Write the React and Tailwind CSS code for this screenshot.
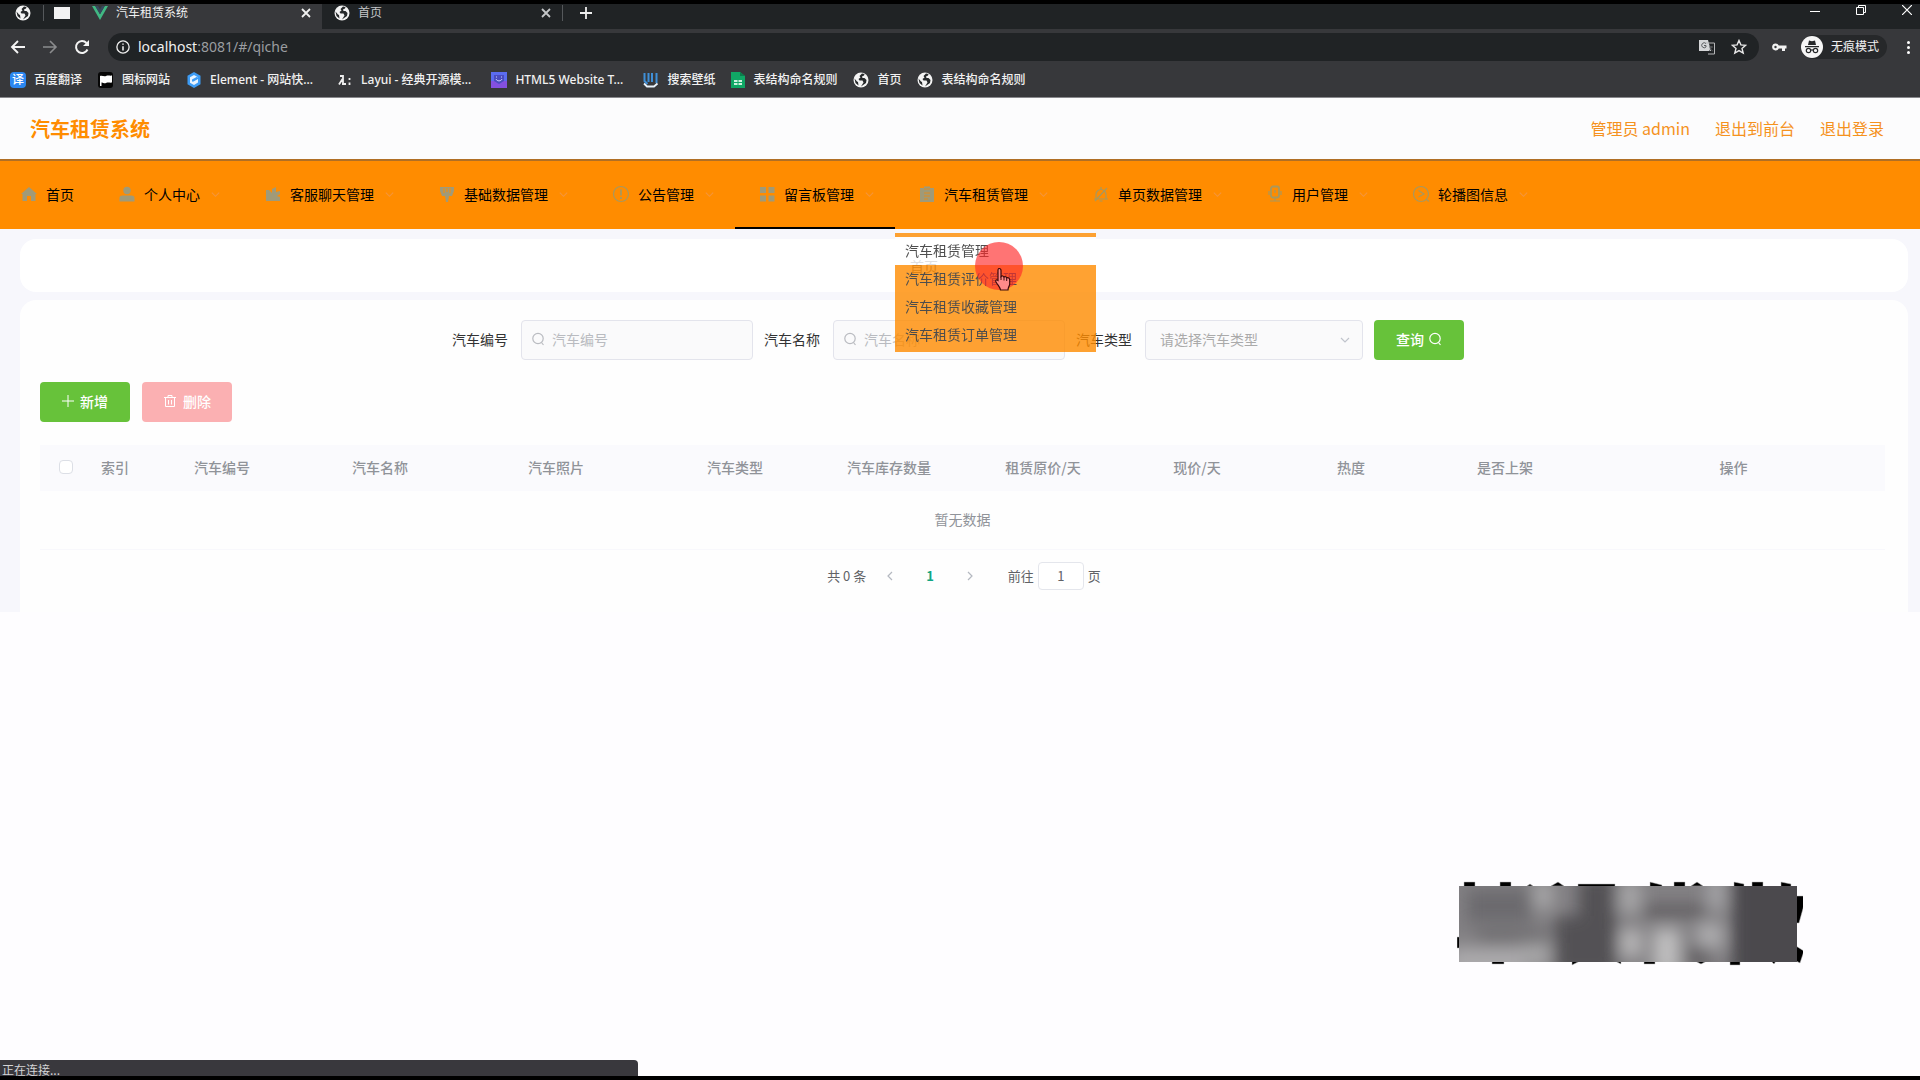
import React from "react";

const Globe = () => (
  <svg viewBox="0 0 16 16" className="h-4 w-4 shrink-0">
    <circle cx="8" cy="8" r="7.5" fill="#f4f4f4" />
    <path d="M9 1.5 6.5 4l1 1.5-2 1.5 1 1.5h3l1 2-2.5 4 5-3.500.5-3-2-2h-2l-.5-1.500 2-1 .5-1.500zM1.500 6.500 4 9.500l1 .5.500 3.500-3-2.500z" fill="#26292b" />
  </svg>
);
const VueLogo = () => (
  <svg viewBox="0 0 16 16" className="h-4 w-4 shrink-0">
    <path d="M0 1h3.200L8 9.300 12.800 1H16L8 15z" fill="#41b883" />
    <path d="M3.200 1H6l2 3.500L10 1h2.800L8 9.300z" fill="#35495e" />
  </svg>
);
const Translate = () => (
  <span className="flex h-4 w-4 shrink-0 items-center justify-center rounded-sm bg-[#2b87f0] text-xs leading-4 text-white">译</span>
);
const Flag = () => (
  <svg viewBox="0 0 16 16" className="h-4 w-4 shrink-0">
    <rect width="15" height="16" rx="3" fill="#060606" />
    <path d="M2 4c2-1 4 1 6 0s4 0 6-.5v7c-2 .5-4-.5-6 .5s-3-1-4.500-.5V14H2z" fill="#fff" />
  </svg>
);
const ElementLogo = () => (
  <svg viewBox="0 0 16 16" className="h-4 w-4 shrink-0">
    <path d="M8 0l6.500 3.800v8.400L8 16l-6.500-3.800V3.800z" fill="#3d9cf5" />
    <path d="M8 3l4 2.200L6.500 8.500v1.500L12 7v3.500L8 13l-4-2.300V5.300z" fill="#e9f4ff" />
    <path d="M6 7.500 11.500 4.500v2L6 9.500z" fill="#3d9cf5" />
  </svg>
);
const LayuiLogo = () => (
  <svg viewBox="0 0 16 16" className="h-4 w-4 shrink-0" fill="none" stroke="#eee" strokeWidth="1.800">
    <path d="M3 4h3v8M5.500 7 2 12.500M5 12h4M12.500 6v2M12.500 10.500v2.500" />
  </svg>
);
const HtmlLogo = () => (
  <svg viewBox="0 0 16 16" className="h-4 w-4 shrink-0">
    <path d="M0 0h16v16H0z" fill="#5b6cf0" />
    <path d="M0 9h16v7H0z" fill="#8450e0" />
    <path d="M3 3h10v6l-5 3-5-3z" fill="#4a4cc0" />
    <path d="M5 7c1 2.500 5 2.500 6 0M5.500 4.500v1M10.500 4.500v1" stroke="#cfd0ff" fill="none" />
  </svg>
);
const WallLogo = () => (
  <svg viewBox="0 0 16 16" className="h-4 w-4 shrink-0" fill="none">
    <path d="M1.500 1v8l3 3M5.500 1v9M9 1v9M13.500 1v10" stroke="#3f8fd8" strokeWidth="2" />
    <path d="M1 11.500 4 14.500h7l3.500-3" stroke="#e8f2fb" strokeWidth="1.800" />
  </svg>
);
const Sheet = () => (
  <svg viewBox="0 0 14 16" className="h-4 w-3.5 shrink-0">
    <path d="M0 0h9l5 4v12H0z" fill="#10a765" />
    <path d="M9 0v4h5z" fill="#0b7d4b" />
    <path d="M3 8h8v5H3z" fill="#cdf3e0" />
    <path d="M3 10.500h8M7 8v5" stroke="#10a765" />
  </svg>
);

const I = ({ children }) => (
  <svg viewBox="0 0 18 18" className="h-[18px] w-6 shrink-0" fill="#a09a78" stroke="none">{children}</svg>
);
const o = { fill: "none", stroke: "#a8985e", strokeWidth: 1.2 };
const icons = {
  home: <I><path d="M9 2 1 9h1.500v7H7v-5h4v5h4.500V9H17z" /></I>,
  user: <I><circle cx="9" cy="5.500" r="3.700" /><path d="M1.500 16.500V13c0-1.800 1.500-2.500 3-2.500h9c1.500 0 3 .7 3 2.500v3.500z" /></I>,
  chart: <I><path d="M2 5h3l3 3V4l4-2v5l4-1v3l-3 2 3 1v4H2z" /></I>,
  pin: <I><path d="M2 2h14v4l-2 5h-3l-1 6H8l-1-6H4L2 6z" /><path d="M6 3v5M12 3v5M9 3v4" stroke="#ff8c00" /></I>,
  notice: <I><circle cx="9" cy="9" r="7.500" {...o} /><path d="M9 4.500v6M9 12v2" {...o} strokeWidth="1.800" /></I>,
  grid: <I><path d="M2 2h6v6H2zM10.500 2h6v6h-6zM2 10.500h6v6H2zM10.500 10.500h6v6h-6z" /></I>,
  clip: <I><path d="M2 3h4V1.500h6V3h4v14H2z" /><path d="M6 4h6M6 8h6M6 11h6M6 14h4" stroke="#e08c20" /></I>,
  bell: <I><path d="M2 14h14M4 14V9.500a5 5 0 0 1 10 0V14M9 2v2M3 16 15 3M7.500 16h3" {...o} /></I>,
  cup: <I><rect x="5" y="1.500" width="8" height="11" rx="2" {...o} strokeWidth="1.800" /><path d="M9 12.500V16M4 16h10M3 6v4M15 6v4M9 5v3" {...o} /></I>,
  clock: <I><circle cx="9" cy="9" r="7.500" {...o} /><path d="M6.500 5.500 12 9l-5.500 3M14 14l3 2.500" {...o} /></I>,
};

const menus = [
  ["个人中心", "user"],
  ["客服聊天管理", "chart"],
  ["基础数据管理", "pin"],
  ["公告管理", "notice"],
  ["留言板管理", "grid"],
  ["汽车租赁管理", "clip"],
  ["单页数据管理", "bell"],
  ["用户管理", "cup"],
  ["轮播图信息", "clock"],
];
const submenus = ["汽车租赁管理", "汽车租赁评价管理", "汽车租赁收藏管理", "汽车租赁订单管理"];
const bookmarks = [
  ["百度翻译", <Translate />, "mr-4"],
  ["图标网站", <Flag />, "mr-4"],
  ["Element - 网站快...", <ElementLogo />, "mr-6"],
  ["Layui - 经典开源模...", <LayuiLogo />, "mr-5"],
  ["HTML5 Website T...", <HtmlLogo />, "mr-5"],
  ["搜索壁纸", <WallLogo />, "mr-4"],
  ["表结构命名规则", <Sheet />, "mr-4"],
  ["首页", <Globe />, "mr-4"],
  ["表结构命名规则", <Globe />, ""],
];
const columns = ["汽车编号", "汽车名称", "汽车照片", "汽车类型", "汽车库存数量", "租赁原价/天", "现价/天", "热度", "是否上架", "操作"];

const Search = ({ className }) => (
  <svg viewBox="0 0 14 14" className={className} fill="none" stroke="currentColor" strokeWidth="1.200">
    <circle cx="7" cy="6.500" r="5.200" /><path d="M10.500 10.500l2 2.500" />
  </svg>
);
const Chevron = ({ d, className }) => (
  <svg viewBox="0 0 12 12" className={className} fill="none" stroke="currentColor" strokeWidth="1.200"><path d={d} /></svg>
);
const Close = () => (
  <svg viewBox="0 0 12 12" className="h-3 w-3" fill="none" stroke="currentColor" strokeWidth="1.800"><path d="M2 2l8 8M10 2l-8 8" /></svg>
);

function Browser() {
  return (
    <header className="border-t-4 border-b border-t-black border-b-[#88888c] bg-[#37383b] font-['Noto_Sans','Noto_Sans_CJK_SC',sans-serif] text-xs text-[#f1f1f1]">
      <div className="flex h-[25px] items-center bg-[#202325]">
        <div className="flex h-full w-20 items-center pb-2">
          <button aria-label="标签" className="ml-[15px]"><Globe /></button>
          <span className="ml-3 h-4 w-px bg-[#55585b]" />
          <button aria-label="空白标签" className="ml-2.5 h-3 w-4 bg-[#f2f2f2]" />
        </div>
        <div className="flex h-full w-[242px] items-center bg-[#37383b] pb-2 pl-3 pr-2.5">
          <VueLogo />
          <span className="ml-2 flex-1">汽车租赁系统</span>
          <button aria-label="关闭"><Close /></button>
        </div>
        <div className="flex h-full w-[240px] items-center pb-2 pl-3 pr-2.5 text-[#c4c6c8]">
          <Globe />
          <span className="ml-2 flex-1">首页</span>
          <button aria-label="关闭"><Close /></button>
        </div>
        <div className="flex h-full flex-1 items-center pb-2">
          <span className="h-4 w-px bg-[#55585b]" />
          <button aria-label="新标签" className="ml-4">
            <svg viewBox="0 0 14 14" className="h-3.5 w-3.5" stroke="#eee" strokeWidth="1.800"><path d="M7 1v12M1 7h12" /></svg>
          </button>
          <div className="mb-1.5 ml-auto flex items-center gap-9 pr-2">
            <button aria-label="最小化"><svg viewBox="0 0 10 10" className="h-2.5 w-2.5" stroke="#fff"><path d="M0 6.500h10" /></svg></button>
            <button aria-label="还原"><svg viewBox="0 0 10 10" className="h-2.5 w-2.5" stroke="#fff" fill="none"><path d="M.5 2.500h7v7h-7zM2.500 2.500v-2h7v7h-2" /></svg></button>
            <button aria-label="关闭窗口"><svg viewBox="0 0 10 10" className="h-2.5 w-2.5" stroke="#fff" strokeWidth="1.200"><path d="M0 0l10 10M10 0 0 10" /></svg></button>
          </div>
        </div>
      </div>
      <div className="flex h-9 items-center pl-2.5 pr-2.5">
        <button aria-label="后退"><svg viewBox="0 0 16 16" className="h-4 w-4" fill="none" stroke="#f4f4f4" strokeWidth="1.900"><path d="M15 8H2M8 2 2 8l6 6" /></svg></button>
        <button aria-label="前进" className="ml-4"><svg viewBox="0 0 16 16" className="h-4 w-4" fill="none" stroke="#8b8c8e" strokeWidth="1.600"><path d="M1 8h13M8 2l6 6-6 6" /></svg></button>
        <button aria-label="刷新" className="ml-4"><svg viewBox="0 0 16 16" className="h-4 w-4" fill="none" stroke="#f4f4f4" strokeWidth="2"><path d="M13.500 10.500A6 6 0 1 1 12.500 4" /><path d="M15 1v6H9z" fill="#f4f4f4" stroke="none" /></svg></button>
        <div className="ml-[18px] flex h-7 flex-1 items-center rounded-full bg-[#202325] pl-2 pr-3">
          <svg viewBox="0 0 16 16" className="h-3.5 w-3.5" fill="none" stroke="#eee" strokeWidth="1.500"><circle cx="8" cy="8" r="7" /><path d="M8 7v5M8 4v1.500" strokeWidth="1.800" /></svg>
          <span className="ml-2 flex-1 text-sm text-[#9a9da0]"><span className="text-[#f1f1f1]">localhost</span>:8081/#/qiche</span>
          <button aria-label="翻译">
            <svg viewBox="0 0 16 16" className="h-4 w-4"><path d="M0 1h9l3 11H0z" fill="#d5d6d8" /><path d="M7 4h8.500v11H9" fill="none" stroke="#b5b6b8" /><path d="M7 4.500A2.500 2.500 0 1 0 7 8V6.500H5M10 8h4M12 7v1c0 2-1 3-2 4M11 9c1 2 2 2.500 3 3" fill="none" stroke="#5c5e61" /></svg>
          </button>
          <button aria-label="收藏" className="ml-4">
            <svg viewBox="0 0 16 16" className="h-4 w-4" fill="none" stroke="#e8e8e8" strokeWidth="1.400"><path d="M8 1.500l1.900 4.400 4.800.4-3.700 3.100 1.200 4.700L8 11.600l-4.200 2.500L5 9.400 1.300 6.300l4.800-.4z" /></svg>
          </button>
        </div>
        <button aria-label="密码" className="ml-3">
          <svg viewBox="0 0 16 16" className="h-4 w-4"><path d="M4.500 4.500a3.500 3.500 0 1 0 3.300 5H11v2.500h3V9.500h1.500v-3H7.800a3.500 3.500 0 0 0-3.300-2zm0 2.300a1.200 1.200 0 1 1 0 2.400 1.200 1.200 0 0 1 0-2.400z" fill="#f2f2f2" /></svg>
        </button>
        <button className="ml-3.5 flex h-6 items-center rounded-full bg-[#26282a] pr-2">
          <svg viewBox="0 0 22 22" className="mr-2 h-[22px] w-[22px]"><circle cx="11" cy="11" r="11" fill="#f6f6f6" /><path d="M4 10h14v1.200H4zM7 9l1-4.500 3 .8 3-.8L15 9z" fill="#26282a" /><g fill="none" stroke="#26282a" strokeWidth="1.200"><circle cx="7.500" cy="14.500" r="2.200" /><circle cx="14.500" cy="14.500" r="2.200" /><path d="M9.700 14h2.600" /></g></svg>
          无痕模式
        </button>
        <button aria-label="更多" className="ml-5 flex flex-col gap-0.5">
          <span className="h-[3px] w-[3px] rounded-full bg-white" /><span className="h-[3px] w-[3px] rounded-full bg-white" /><span className="h-[3px] w-[3px] rounded-full bg-white" />
        </button>
      </div>
      <nav className="flex h-8 items-center pl-2.5 pb-0.5 font-medium">
        {bookmarks.map(([t, icon, m], i) => (
          <a key={i} href="#" className={"flex items-center gap-2 whitespace-nowrap " + m}>{icon}<span>{t}</span></a>
        ))}
      </nav>
    </header>
  );
}

function NavBar() {
  return (
    <nav className="flex h-[70px] items-center border-t-2 border-[#b06f25] bg-[#ff8c00] text-sm text-black">
      <a href="#" className="flex h-full items-center gap-[5px] border-b-2 border-transparent pl-[17px] pr-[21px]">{icons.home}首页</a>
      {menus.map(([t, ic]) => (
        <div key={t} className="relative h-full">
          <button className={"flex h-full items-center whitespace-nowrap px-5 border-b-2 " + (t === "留言板管理" ? "border-black" : "border-transparent")}>
            {icons[ic]}
            <span className="ml-[5px]">{t}</span>
            <Chevron d="M2 4l4 4 4-4" className="ml-2.5 h-[11px] w-[11px] text-[#f5953a]" />
          </button>
          {t === "汽车租赁管理" && (
            <div className="absolute left-0 top-[72px] z-10 w-[201px]">
              <div className="bg-[#ff8c00] pb-[3px] pt-1 text-sm text-[#222] opacity-80">
                {submenus.map((s, i) => (
                  <a key={s} href="#" className={"flex h-7 items-center px-2.5 pb-0.5 " + (i === 0 ? "bg-white" : "")}>{s}</a>
                ))}
              </div>
              <span className="absolute left-20 top-[9px] h-12 w-12 rounded-full bg-[#ff2a2a]/65" />
              <svg viewBox="0 0 18 24" className="absolute left-[99px] top-[34px] h-6 w-[18px]">
                <path d="M5 1.500c1.500 0 2 1 2 2v6c1-1 2.500-.5 3 .5 1-.6 2.300-.2 2.700.8 1.500-.5 3 .3 3 2V17c0 2-1.700 3-1.700 6H6.500c0-2-2-4-4.500-8-.8-1.500 0-2.500 1.200-2L4 13.500v-10c0-1 .3-2 1-2z" fill="#ff8a8a" stroke="#3c0a0a" strokeWidth="1.200" />
                <path d="M7 9.500V13M10 10v3.500M12.700 11v3" stroke="#3c0a0a" />
              </svg>
            </div>
          )}
        </div>
      ))}
    </nav>
  );
}

function SearchBar() {
  const box = "h-10 rounded border border-[#e3e4ec] bg-[#fafafb] pb-0.5 text-sm text-[#aaa] placeholder:text-[#b9bbc0]";
  return (
    <form className="flex items-center justify-center pt-5 pr-3 text-sm text-[#333]">
      <label htmlFor="no" className="mr-[13px] pb-0.5">汽车编号</label>
      <div className="relative mr-[11px]">
        <input id="no" placeholder="汽车编号" className={box + " w-[232px] pl-[30px]"} />
        <Search className="absolute left-2.5 top-3 h-3.5 w-3.5 text-[#b9bbc0]" />
      </div>
      <label htmlFor="name" className="mr-[13px] pb-0.5">汽车名称</label>
      <div className="relative mr-[11px]">
        <input id="name" placeholder="汽车名称" className={box + " w-[232px] pl-[30px]"} />
        <Search className="absolute left-2.5 top-3 h-3.5 w-3.5 text-[#b9bbc0]" />
      </div>
      <label htmlFor="type" className="mr-[13px] pb-0.5">汽车类型</label>
      <div className="relative mr-[11px]">
        <select id="type" className={box + " w-[218px] appearance-none pl-3.5"}><option>请选择汽车类型</option></select>
        <Chevron d="M2 4l4 4 4-4" className="absolute right-3 top-3.5 h-3 w-3 text-[#c0c4cc]" />
      </div>
      <button type="button" className="flex h-10 w-[90px] items-center justify-center gap-1 rounded bg-[#67c23a] pb-0.5 font-medium text-white">查询<Search className="h-3.5 w-3.5" /></button>
    </form>
  );
}

export default function App() {
  return (
    <div className="flex min-h-screen flex-col bg-[#fefdff] font-['Noto_Sans_CJK_SC',sans-serif]">
      <Browser />
      <div className="flex h-[61px] items-center bg-[#fcfcfd] pl-[30px] pr-9 text-[#f5921e]">
        <h1 className="flex-1 text-xl font-bold text-[#ff8c00]">汽车租赁系统</h1>
        <div className="flex gap-[25px] pb-0.5 text-base">
          <span>管理员 admin</span><a href="#">退出到前台</a><a href="#">退出登录</a>
        </div>
      </div>
      <NavBar />
      <main className="bg-[#f7f7fc] pl-5 pr-3 pt-2.5">
        <div className="flex h-[53px] items-center justify-center rounded-2xl bg-white pr-20 text-sm text-[#606266]">首页</div>
        <section className="mt-2 rounded-t-2xl bg-[#fefefe] px-5 pb-[22px]">
          <SearchBar />
          <div className="flex gap-3 pt-[22px] text-sm font-medium text-white">
            <button className="flex h-10 w-[90px] items-center justify-center gap-1.5 rounded bg-[#67c23a] pb-0.5">
              <svg viewBox="0 0 12 12" className="h-3 w-3" stroke="#fff"><path d="M6 0v12M0 6h12" /></svg>新增
            </button>
            <button className="flex h-10 w-[90px] items-center justify-center gap-1.5 rounded bg-[#fbb0b2] pb-0.5">
              <svg viewBox="0 0 14 14" className="h-3.5 w-3.5" fill="none" stroke="#fff"><path d="M1 3.500h12M5 3V1.500h4V3M2.500 3.500v9h9v-9M5.500 6v4.500M8.500 6v4.500" /></svg>删除
            </button>
          </div>
          <div className="pr-1 pt-[23px]">
            <table className="w-full table-fixed text-center text-sm text-[#909399]">
              <colgroup>
                <col className="w-[52px]" /><col className="w-[46px]" /><col className="w-[168px]" /><col className="w-[148px]" /><col className="w-[204px]" />
                <col className="w-[154px]" /><col className="w-[154px]" /><col className="w-[154px]" /><col className="w-[154px]" /><col className="w-[154px]" /><col className="w-[154px]" /><col className="w-[303px]" />
              </colgroup>
              <thead>
                <tr className="h-[46px] bg-[#fafafd]">
                  <th className="pb-0.5"><input type="checkbox" aria-label="全选" className="block mx-auto h-3.5 w-3.5 appearance-none rounded-sm border border-[#dcdfe6] bg-white" /></th>
                  <th className="pb-0.5 font-medium">索引</th>
                  {columns.map((c) => <th key={c} className="pb-0.5 font-medium">{c}</th>)}
                </tr>
              </thead>
              <tbody><tr className="h-[58px] border-b border-[#f8f8fc]"><td colSpan={12} className="pb-0.5">暂无数据</td></tr></tbody>
            </table>
          </div>
          <div className="mt-3 flex h-7 items-center justify-center text-[13px] text-[#606266]">
            <span>共 0 条</span>
            <button aria-label="上一页" className="ml-[18px]"><Chevron d="M8 2 4 6l4 4" className="h-3 w-3 text-[#b4b8c0]" /></button>
            <button className="mx-[30px] font-bold text-[#11a683]">1</button>
            <button aria-label="下一页"><Chevron d="M4 2l4 4-4 4" className="h-3 w-3 text-[#b4b8c0]" /></button>
            <label htmlFor="page" className="ml-8">前往</label>
            <input id="page" defaultValue="1" className="mx-1 h-7 w-[46px] rounded-sm border border-[#e4e6ec] bg-white text-center" />
            <span>页</span>
          </div>
        </section>
      </main>
      <div className="mr-[117px] mt-auto flex justify-end pb-[93px]">
        <svg viewBox="0 0 346 86" className="h-[86px] w-[346px]">
          <defs>
            <filter id="soft" x="-20%" y="-20%" width="140%" height="140%"><feGaussianBlur stdDeviation="8" /></filter>
            <clipPath id="box"><path d="M2 5h338v76H2z" /></clipPath>
          </defs>
          <path d="M7 1h11v5H7zM43 1h11v5H43zM70 5l3-2 3 2zM94 5l7-4 6 4zM121 3h37v3h-37zM193 1l12 3v2h-12zM217 1h11v5h-11zM234 5l6-4 6 4zM277 1l10 2v3h-10zM295 1h11v5h-11zM324 1l10 2v3h-10zM339 15h8v9l-5 18h-3zM339 65l8 5-4 12-4-2zM0 56h3v11H0zM35 80h12v3H35zM115 80h8l-8 4zM158 80h6v3zM187 80h11v3h-11zM238 80h12l-6 3zM273 80h10v4h-10zM314 80h5l-2 3z" fill="#000" stroke="#bbb" strokeWidth=".5" />
          <g clipPath="url(#box)">
            <path d="M2 5h338v76H2z" fill="#828083" />
            <g filter="url(#soft)">
              <path d="M10 8h65v34H10z" fill="#6c6a6e" /><path d="M-8 66h75v30H-8z" fill="#aaa9ab" /><path d="M20 52h70v9H20z" fill="#646265" /><path d="M65 62h28v25H65zM76 0h20v28H76z" fill="#a5a4a6" />
              <path d="M98 35h62v60H98zM122 -5h36v50h-36z" fill="#535154" /><path d="M162 0h22v32h-22z" fill="#a5a4a6" /><path d="M163 48h22v28h-22z" fill="#b5b4b5" />
              <path d="M185 24h65v12h-65z" fill="#5e5c5f" /><path d="M196 48h27v45h-27z" fill="#bebdbe" /><path d="M240 42h26v26h-26z" fill="#acabad" /><path d="M228 66h25v20h-25z" fill="#636164" />
              <path d="M250 -5h18v34h-18z" fill="#a3a2a5" /><path d="M275 -10h90v110h-90z" fill="#4c4a4d" />
            </g>
          </g>
        </svg>
      </div>
      <footer className="border-b-4 border-black">
        <div className="h-4 w-1/3 max-w-[638px] rounded-tr bg-[#39383d] pl-0.5 text-xs leading-5 text-[#d4d4d6]">正在连接...</div>
      </footer>
    </div>
  );
}
